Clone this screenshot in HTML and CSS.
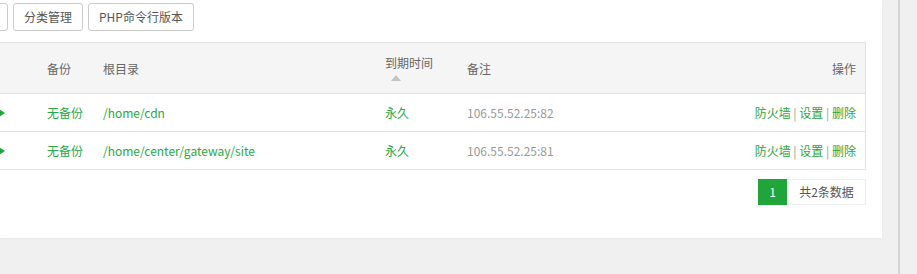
FILE: index.html
```html
<!DOCTYPE html>
<html>
<head>
  <meta charset="utf-8">
  <link rel="stylesheet" href="styles.css">
</head>
<body>
  <div class="frame">
    <div class="panel">
      <div class="toolbar">
        <button class="btn btn-cut"></button>
        <button class="btn">分类管理</button>
        <button class="btn">PHP命令行版本</button>
      </div>

      <table class="sites">
        <thead>
          <tr>
            <th class="c-state"></th>
            <th class="c-backup">备份</th>
            <th class="c-path">根目录</th>
            <th class="c-expire">
              <div>到期时间</div>
              <span class="sort-up"></span>
            </th>
            <th class="c-note">备注</th>
            <th class="c-ops">操作</th>
          </tr>
        </thead>
        <tbody>
          <tr>
            <td class="c-state"><span class="play"></span></td>
            <td class="green">无备份</td>
            <td class="green">/home/cdn</td>
            <td class="green">永久</td>
            <td class="grey">106.55.52.25:82</td>
            <td class="c-ops"><a>防火墙</a> <span class="sep">|</span> <a>设置</a> <span class="sep">|</span> <a>删除</a></td>
          </tr>
          <tr>
            <td class="c-state"><span class="play"></span></td>
            <td class="green">无备份</td>
            <td class="green">/home/center/gateway/site</td>
            <td class="green">永久</td>
            <td class="grey">106.55.52.25:81</td>
            <td class="c-ops"><a>防火墙</a> <span class="sep">|</span> <a>设置</a> <span class="sep">|</span> <a>删除</a></td>
          </tr>
        </tbody>
      </table>

      <div class="pager">
        <span class="page-cur">1</span>
        <span class="page-total">共2条数据</span>
      </div>
    </div>
  </div>
</body>
</html>
```

FILE: styles.css
```css
body {
  margin: 0;
  background-color: #f0f0f0;
  font-family: "Noto Sans CJK SC", "Noto Sans", sans-serif;
  font-size: 12px;
  color: #666;
  overflow: hidden;
}

.frame {
  width: 898px;
  height: 274px;
  border-right: 2px solid #d4d4d4;
}

.panel {
  width: 882px;
  height: 238px;
  background-color: #fff;
  padding-top: 3px;
  box-sizing: border-box;
  box-shadow: 0 1px 2px rgba(0, 0, 0, 0.04);
}

.toolbar {
  display: flex;
  gap: 5px;
  margin-left: -72px;
  height: 28px;
}

.btn {
  height: 28px;
  padding: 0 10px;
  border: 1px solid #ccc;
  border-radius: 3px;
  background-color: #fff;
  color: #555;
  font-family: inherit;
  font-size: 12px;
  line-height: 26px;
}

.btn-cut {
  width: 80px;
}

.sites {
  margin-top: 11px;
  width: 866px;
  border-collapse: collapse;
  border-top: 1px solid #e2e2e2;
  border-right: 1px solid #e2e2e2;
}

.sites th {
  height: 48px;
  background-color: #f5f5f5;
  font-weight: normal;
  text-align: left;
  color: #666;
  padding: 0;
  border-bottom: 1px solid #e2e2e2;
  vertical-align: middle;
}

.sites td {
  height: 37px;
  padding: 0;
  border-bottom: 1px solid #e2e2e2;
}

.c-state { width: 47px; }
.c-backup { width: 56px; }
.c-path { width: 282px; }
.c-expire { width: 82px; }
.c-note { width: auto; }

.sites .c-ops {
  text-align: right;
  padding-right: 9px;
}

.sites th.c-expire {
  padding-bottom: 2px;
}

.sort-up {
  display: block;
  width: 0;
  height: 0;
  margin: 4px 0 0 6px;
  border-left: 5px solid transparent;
  border-right: 5px solid transparent;
  border-bottom: 6px solid #c4c4c4;
}

.play {
  display: block;
  width: 0;
  height: 0;
  margin-left: -1px;
  border-top: 4px solid transparent;
  border-bottom: 4px solid transparent;
  border-left: 6px solid #20a53a;
}

.green {
  color: #2aa745;
}

.grey {
  color: #999;
}

.c-ops a {
  color: #2aa745;
}

.sep {
  color: #999;
}

.pager {
  display: flex;
  justify-content: flex-end;
  width: 866px;
  margin-top: 9px;
}

.page-cur {
  width: 29px;
  height: 26px;
  line-height: 26px;
  text-align: center;
  background-color: #20a53a;
  color: #fff;
}

.page-total {
  width: 77px;
  height: 24px;
  line-height: 24px;
  text-align: center;
  border: 1px solid #eee;
  color: #555;
}
```
